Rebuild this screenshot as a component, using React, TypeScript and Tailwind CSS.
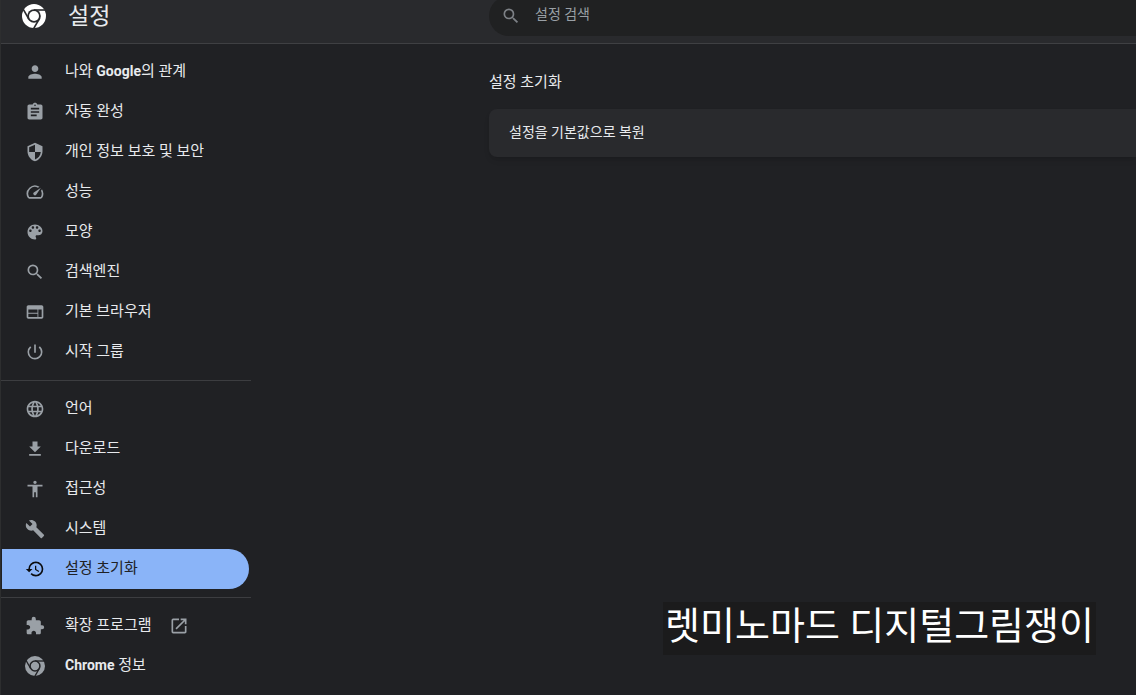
import { useId, useState } from "react";
import type { ComponentType, ReactNode } from "react";
import {
  MdAccessibility,
  MdAssignment,
  MdBuild,
  MdExtension,
  MdFileDownload,
  MdHistory,
  MdLanguage,
  MdOpenInNew,
  MdPerson,
  MdPowerSettingsNew,
  MdSearch,
  MdSecurity,
  MdSpeed,
  MdWeb,
} from "react-icons/md";
import { clsx } from "clsx";

type IconProps = { className?: string };

type MenuItem = {
  id: string;
  label: ReactNode;
  icon: ComponentType<IconProps>;
  external?: boolean;
};

function ChromeLogo({ className }: IconProps) {
  const maskId = useId();

  return (
    <svg viewBox="0 0 24 24" className={className} aria-hidden="true">
      <mask id={maskId}>
        <circle cx="12" cy="12" r="12" fill="#fff" />
        <circle cx="12" cy="12" r="6.8" fill="#000" />
        <g stroke="#000" strokeWidth="1.6">
          <path d="M12 6h13" />
          <path d="M12 6h13" transform="rotate(120 12 12)" />
          <path d="M12 6h13" transform="rotate(240 12 12)" />
        </g>
        <circle cx="12" cy="12" r="5" fill="#fff" />
      </mask>
      <rect width="24" height="24" fill="currentColor" mask={`url(#${maskId})`} />
    </svg>
  );
}

function PaletteIcon({ className }: IconProps) {
  return (
    <svg viewBox="0 0 24 24" fill="currentColor" className={className} aria-hidden="true">
      <path d="M12 3c-4.97 0-9 4.03-9 9s4.03 9 9 9c.83 0 1.5-.67 1.5-1.5 0-.39-.15-.74-.39-1.01-.23-.26-.38-.61-.38-.99 0-.83.67-1.5 1.5-1.5H16c2.76 0 5-2.24 5-5 0-4.42-4.03-8-9-8zm-5.5 9c-.83 0-1.5-.67-1.5-1.5S5.67 9 6.5 9 8 9.67 8 10.5 7.33 12 6.5 12zm3-4C8.67 8 8 7.33 8 6.5S8.67 5 9.5 5s1.5.67 1.5 1.5S10.33 8 9.5 8zm5 0c-.83 0-1.5-.67-1.5-1.5S13.67 5 14.5 5s1.5.67 1.5 1.5S15.33 8 14.5 8zm3 4c-.83 0-1.5-.67-1.5-1.5S16.67 9 17.5 9s1.5.67 1.5 1.5-.67 1.5-1.5 1.5z" />
    </svg>
  );
}

function Latin({ children }: { children: ReactNode }) {
  return <span className="text-sm font-bold">{children}</span>;
}

const menuGroups: MenuItem[][] = [
  [
    { id: "people", label: <>나와 <Latin>Google</Latin>의 관계</>, icon: MdPerson },
    { id: "autofill", label: "자동 완성", icon: MdAssignment },
    { id: "privacy", label: "개인 정보 보호 및 보안", icon: MdSecurity },
    { id: "performance", label: "성능", icon: MdSpeed },
    { id: "appearance", label: "모양", icon: PaletteIcon },
    { id: "search", label: "검색엔진", icon: MdSearch },
    { id: "defaultBrowser", label: "기본 브라우저", icon: MdWeb },
    { id: "onStartup", label: "시작 그룹", icon: MdPowerSettingsNew },
  ],
  [
    { id: "languages", label: "언어", icon: MdLanguage },
    { id: "downloads", label: "다운로드", icon: MdFileDownload },
    { id: "accessibility", label: "접근성", icon: MdAccessibility },
    { id: "system", label: "시스템", icon: MdBuild },
    { id: "reset", label: "설정 초기화", icon: MdHistory },
  ],
  [
    { id: "extensions", label: "확장 프로그램", icon: MdExtension, external: true },
    { id: "help", label: <><Latin>Chrome</Latin> 정보</>, icon: ChromeLogo },
  ],
];

function Toolbar() {
  return (
    <header className="flex h-11 items-start overflow-hidden border-b border-[#3f4043] bg-[#292a2d]">
      <div className="flex w-[488px] shrink-0 items-start gap-[22px] pl-[21px]">
        <ChromeLogo className="mt-1 size-6 text-white" />
        <h1 className="text-[23px] leading-[34px]">설정</h1>
      </div>
      <label className="-mt-1 flex h-10 flex-1 items-center gap-3.5 rounded-l-full bg-[#202122] pl-3">
        <MdSearch className="size-5 shrink-0 text-[#7d8186]" />
        <input
          type="search"
          aria-label="설정 검색"
          placeholder="설정 검색"
          className="min-w-0 flex-1 bg-transparent pb-1 text-sm outline-none placeholder:text-[#9aa0a6]"
        />
      </label>
    </header>
  );
}

function Menu({ selected, onSelect }: { selected: string; onSelect: (id: string) => void }) {
  return (
    <nav className="w-[250px] shrink-0 divide-y divide-[#3c3d40]">
      {menuGroups.map((group) => (
        <ul key={group[0].id} className="py-2">
          {group.map(({ id, label, icon: Icon, external }) => (
            <li key={id} className="pr-0.5 pl-px">
              <a
                href={`#${id}`}
                onClick={() => onSelect(id)}
                className={clsx(
                  "flex h-10 items-center rounded-r-full pl-[23px]",
                  id === selected ? "bg-[#8ab4f8] text-[#202124]" : "text-[#e8eaed]",
                )}
              >
                <Icon
                  className={clsx(
                    "size-5 shrink-0",
                    id === selected ? "text-[#0b0c0e]" : "text-[#9aa0a6]",
                  )}
                />
                <span className="ml-5 pb-0.5 text-[15px] leading-5">{label}</span>
                {external ? <MdOpenInNew className="ml-[17px] size-5 text-[#9aa0a6]" /> : null}
              </a>
            </li>
          ))}
        </ul>
      ))}
    </nav>
  );
}

export default function App() {
  const [selected, setSelected] = useState("reset");

  return (
    <div className="relative flex min-h-screen flex-col border-l border-[#2d2e2f] bg-[#202124] font-['Roboto','Noto_Sans_CJK_KR',sans-serif] text-[#e8eaed]">
      <Toolbar />
      <div className="flex flex-1">
        <Menu selected={selected} onSelect={setSelected} />
        <main className="min-w-0 flex-1 pt-7 pl-[238px]">
          <h2 className="text-[15px] leading-5">설정 초기화</h2>
          <button
            type="button"
            className="mt-[17px] flex h-12 w-full items-center rounded-l-lg bg-[#292a2d] pb-0.5 pl-5 text-left text-sm shadow-md"
          >
            설정을 기본값으로 복원
          </button>
        </main>
      </div>
      <p className="absolute right-10 bottom-10 bg-[#1b1b1c] px-0.5 pb-1 text-[38px] leading-[49px] text-white">
        렛미노마드 디지털그림쟁이
      </p>
    </div>
  );
}
